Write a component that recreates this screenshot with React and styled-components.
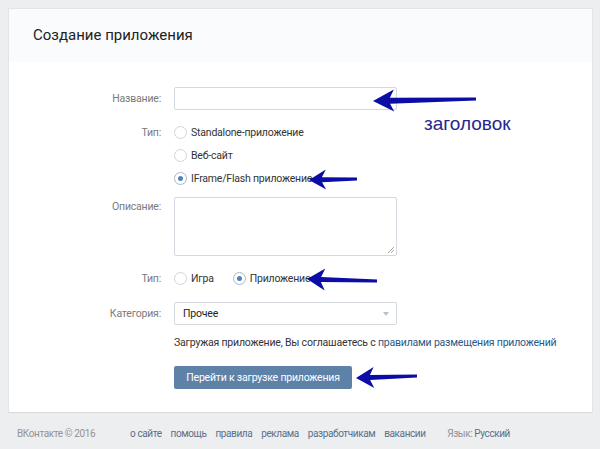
import React from "react";
import styled, { createGlobalStyle } from "styled-components";

const Global = createGlobalStyle`
  html, body { margin: 0; padding: 0; background: #edeef0; }
  body { font-family: Roboto, "Liberation Sans", Arial, sans-serif; font-size: 10.5px; letter-spacing: -0.2px; color: #000; }
  * { box-sizing: border-box; }
`;

const Page = styled.div`
  position: relative;
  width: 600px;
  height: 449px;
  overflow: hidden;
  padding-top: 9px;
`;

const Card = styled.div`
  margin-left: 9px;
  width: 583px;
  background: #fff;
  box-shadow: 0 1px 0 0 #d7d8db, 0 0 0 1px #e3e4e8;
`;

const Header = styled.div`
  height: 53px;
  background: #fafbfc;
  display: flex;
  align-items: center;
  padding-left: 24px;
  padding-bottom: 2px;
  font-size: 15px;
  letter-spacing: 0;
  color: #222;
`;

const Body = styled.div`
  padding: 25px 0 23px;
`;

const Row = styled.div`
  display: grid;
  grid-template-columns: 152px 223px;
  column-gap: 13px;
  margin-top: ${(p) => p.$mt || 0}px;
  align-items: ${(p) => (p.$top ? "start" : "center")};
`;

const Label = styled.div`
  text-align: right;
  color: #7a7a7a;
  line-height: ${(p) => p.$lh || 23}px;
`;

const Field = styled.div`
  grid-column: 2;
`;

const Wide = styled.div`
  grid-column: 2 / span 1;
  white-space: nowrap;
  line-height: 18px;
  color: #333;
`;

const TextInput = styled.div`
  height: 23px;
  border: 1px solid #d3d9de;
  border-radius: 2px;
  background: #fff;
`;

const TextArea = styled.div`
  position: relative;
  height: 59px;
  border: 1px solid #d3d9de;
  border-radius: 2px;
  background: #fff;
`;

const Grip = styled.svg`
  position: absolute;
  right: 1px;
  bottom: 1px;
`;

const Options = styled.div`
  display: flex;
  flex-direction: ${(p) => (p.$row ? "row" : "column")};
  gap: ${(p) => (p.$row ? 19 : 0)}px;
`;

const Option = styled.div`
  display: flex;
  align-items: center;
  height: 23px;
  gap: 4px;
  color: #333;
  white-space: nowrap;
`;

const Radio = styled.span`
  width: 13px;
  height: 13px;
  border-radius: 50%;
  border: 1px solid ${(p) => (p.$on ? "#a9b8c9" : "#d0d5db")};
  background: #fff;
  display: inline-flex;
  align-items: center;
  justify-content: center;
  flex: none;
  &::after {
    content: "";
    width: 5px;
    height: 5px;
    border-radius: 50%;
    background: ${(p) => (p.$on ? "#5181b8" : "transparent")};
  }
`;

const Select = styled.div`
  height: 23px;
  border: 1px solid #d3d9de;
  border-radius: 2px;
  display: flex;
  align-items: center;
  justify-content: space-between;
  padding: 0 7px 0 8px;
  color: #222;
`;

const Caret = styled.span`
  width: 0;
  height: 0;
  border-left: 3.5px solid transparent;
  border-right: 3.5px solid transparent;
  border-top: 4px solid #b8c0c9;
`;

const Link = styled.a`
  color: #2a5885;
  text-decoration: none;
`;

const Button = styled.button`
  width: 178px;
  height: 23px;
  border: none;
  border-radius: 2px;
  background: #5e81a8;
  color: #fff;
  font-family: inherit;
  font-size: 10.5px;
  letter-spacing: -0.2px;
  padding: 0;
`;

const Footer = styled.div`
  display: flex;
  align-items: center;
  padding: 14px 90px 0 17px;
  line-height: 16px;
  font-size: 10px;
  letter-spacing: -0.4px;
  white-space: nowrap;
`;

const Copy = styled.div`
  flex: 0 0 113px;
  color: #939393;
`;

const FootLinks = styled.div`
  display: flex;
  gap: 9px;
`;

const FootLink = styled.a`
  color: #5b7089;
  text-decoration: none;
`;

const Lang = styled.div`
  margin-left: auto;
  color: #939393;
  & a { color: #5b7089; }
`;

const Overlay = styled.svg`
  position: absolute;
  left: 0;
  top: 0;
  pointer-events: none;
`;

const Note = styled.div`
  position: absolute;
  left: 424px;
  top: 113px;
  font-size: 19px;
  letter-spacing: 0;
  color: #26268e;
  font-family: "Liberation Sans", Arial, sans-serif;
`;

function arrowPoints(tx, ty, ex, ey, hl, hw, sw1, sw2) {
  const dx = ex - tx;
  const dy = ey - ty;
  const L = Math.hypot(dx, dy);
  const ux = dx / L, uy = dy / L;
  const vx = -uy, vy = ux;
  const P = (a, b) => [tx + ux * a + vx * b, ty + uy * a + vy * b];
  const pts = [
    P(0, 0),
    P(hl + 2, -hw / 2),
    P(hl - 2, -sw1 / 2),
    P(L, -sw2 / 2),
    P(L, sw2 / 2),
    P(hl - 2, sw1 / 2),
    P(hl + 2, hw / 2),
  ];
  return pts.map((p) => p.map((n) => n.toFixed(1)).join(",")).join(" ");
}

const arrows = [
  [373, 101, 476, 99, 19, 22, 6, 3],
  [309, 180, 357, 179, 15, 20, 5, 3],
  [307, 279, 377, 281, 16, 22, 5, 3],
  [356, 378, 417, 376, 16, 21, 5, 3],
];

export default function App() {
  return (
    <>
      <Global />
      <Page>
        <Card>
          <Header>Создание приложения</Header>
          <Body>
            <Row>
              <Label>Название:</Label>
              <TextInput />
            </Row>
            <Row $mt={11} $top>
              <Label>Тип:</Label>
              <Options>
                <Option><Radio />Standalone-приложение</Option>
                <Option><Radio />Веб-сайт</Option>
                <Option><Radio $on />IFrame/Flash приложение</Option>
              </Options>
            </Row>
            <Row $mt={7} $top>
              <Label $lh={20}>Описание:</Label>
              <TextArea>
                <Grip width="8" height="8" viewBox="0 0 8 8">
                  <path d="M7 1 L1 7 M7 4 L4 7" stroke="#aaa" strokeWidth="1" />
                </Grip>
              </TextArea>
            </Row>
            <Row $mt={11}>
              <Label>Тип:</Label>
              <Options $row>
                <Option><Radio />Игра</Option>
                <Option><Radio $on />Приложение</Option>
              </Options>
            </Row>
            <Row $mt={12}>
              <Label>Категория:</Label>
              <Select>Прочее<Caret /></Select>
            </Row>
            <Row $mt={9}>
              <Wide>
                Загружая приложение, Вы соглашаетесь с{" "}
                <Link href="#">правилами размещения приложений</Link>
              </Wide>
            </Row>
            <Row $mt={14}>
              <Field>
                <Button>Перейти к загрузке приложения</Button>
              </Field>
            </Row>
          </Body>
        </Card>
        <Footer>
          <Copy>ВКонтакте © 2016</Copy>
          <FootLinks>
            <FootLink href="#">о сайте</FootLink>
            <FootLink href="#">помощь</FootLink>
            <FootLink href="#">правила</FootLink>
            <FootLink href="#">реклама</FootLink>
            <FootLink href="#">разработчикам</FootLink>
            <FootLink href="#">вакансии</FootLink>
          </FootLinks>
          <Lang>Язык: <a>Русский</a></Lang>
        </Footer>
        <Overlay width="600" height="449" viewBox="0 0 600 449">
          {arrows.map((a, i) => (
            <polygon key={i} points={arrowPoints(...a)} fill="#0c0ca6" />
          ))}
        </Overlay>
        <Note>заголовок</Note>
      </Page>
    </>
  );
}
